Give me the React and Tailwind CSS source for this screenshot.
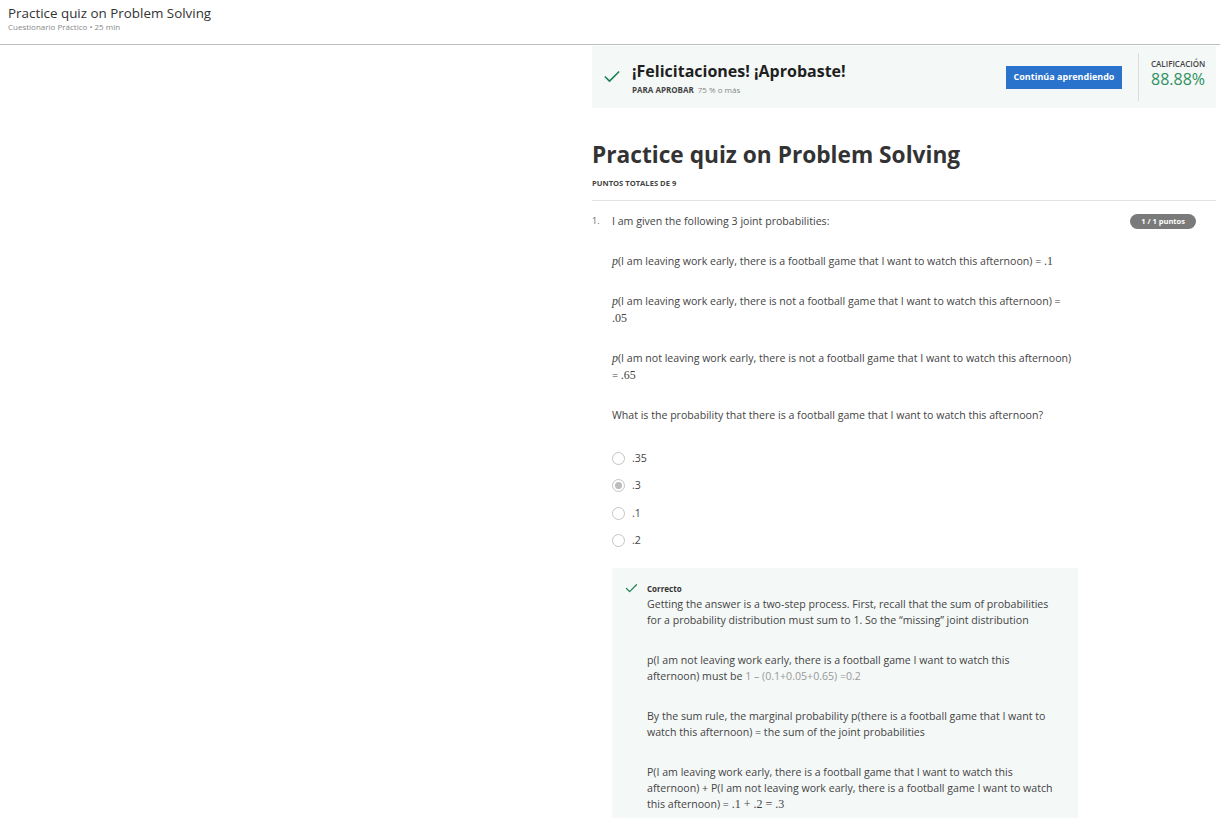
import { Check } from 'lucide-react'

const M = ({ children, italic }) => (
  <span className={`font-['Liberation_Serif',serif] text-[12px] leading-none ${italic ? 'italic' : ''}`}>{children}</span>
)

function Radio({ checked, label }) {
  return (
    <div className="flex items-center gap-[7px] h-[14px]">
      <span className="w-[13px] h-[13px] rounded-full border border-[#c4c4c4] bg-white flex items-center justify-center">
        {checked && <span className="w-[7px] h-[7px] rounded-full bg-[#bdbdbd]" />}
      </span>
      <span className="text-[10.6px] text-[#444]">{label}</span>
    </div>
  )
}

export default function App() {
  return (
    <div className="min-h-screen bg-white font-['Open_Sans',sans-serif] text-[#373a3c]">
      {/* Top header */}
      <div className="h-[45px] border-b border-[#bdbdbd] px-2 pt-[5px]">
        <p className="text-[13.4px] leading-[17px] text-[#333]">Practice quiz on Problem Solving</p>
        <p className="text-[8px] leading-[10px] text-[#888]">Cuestionario Práctico • 25 min</p>
      </div>

      <div className="flex">
        <div className="w-[592px] shrink-0" />
        <div className="w-[624px] pb-10">
          {/* Result banner */}
          <div className="mt-[1px] h-[62px] bg-[#f4f8f7] flex items-center">
            <Check className="ml-[10px] w-[20px] h-[20px] text-[#1f8354]" strokeWidth={2} />
            <div className="ml-[10px] flex-1">
              <p className="text-[16px] leading-[22px] font-bold text-[#1f1f1f]">¡Felicitaciones! ¡Aprobaste!</p>
              <p className="text-[8px] leading-[10px] text-[#888] mt-[3px]">
                <span className="font-bold text-[#444] mr-[4px]">PARA APROBAR</span>75 % o más
              </p>
            </div>
            <div className="w-[116px] h-[23px] bg-[#2a73cc] text-white text-[9px] font-bold flex items-center justify-center mr-[16px]">
              Continúa aprendiendo
            </div>
            <div className="w-px h-[48px] bg-[#dcdcdc]" />
            <div className="w-[77px] pl-[12px] self-start pt-[13px]">
              <p className="text-[8px] leading-[10px] text-[#444] font-semibold">CALIFICACIÓN</p>
              <p className="text-[16px] leading-[20px] text-[#2f9161]">88.88%</p>
            </div>
          </div>

          {/* Title */}
          <h1 className="mt-[32px] text-[22.7px] leading-[30px] font-bold text-[#333]">Practice quiz on Problem Solving</h1>
          <p className="mt-[8px] text-[7.6px] leading-[10px] font-bold text-[#444]">PUNTOS TOTALES DE 9</p>
          <div className="mt-[12px] border-t border-[#e2e2e2]" />

          {/* Question */}
          <div className="mt-[12px] flex items-start">
            <span className="w-[20px] text-[9px] leading-[16px] text-[#666]">1.</span>
            <div className="w-[466px] text-[10.6px] leading-[17px] text-[#444]">
              <p>I am given the following 3 joint probabilities:</p>
              <p className="mt-[23px]"><M italic>p</M>(I am leaving work early, there is a football game that I want to watch this afternoon) = <M>.1</M></p>
              <p className="mt-[23px]"><M italic>p</M>(I am leaving work early, there is not a football game that I want to watch this afternoon) = <M>.05</M></p>
              <p className="mt-[23px]"><M italic>p</M>(I am not leaving work early, there is not a football game that I want to watch this afternoon) = <M>.65</M></p>
              <p className="mt-[23px]">What is the probability that there is a football game that I want to watch this afternoon?</p>

              <div className="mt-[27px] flex flex-col gap-[13.5px]">
                <Radio label=".35" />
                <Radio checked label=".3" />
                <Radio label=".1" />
                <Radio label=".2" />
              </div>

              <div className="mt-[20px] w-[466px] bg-[#f4f8f7] pt-[14px] pb-[6px] pl-[12px] pr-[16px] flex">
                <Check className="mt-[-1px] w-[15px] h-[15px] text-[#1f8354] shrink-0" strokeWidth={2} />
                <div className="ml-[8px] text-[10.6px] leading-[16px] text-[#444]">
                  <p className="text-[8px] leading-[14px] font-bold text-[#333]">Correcto</p>
                  <p>Getting the answer is a two-step process. First, recall that the sum of probabilities for a probability distribution must sum to 1. So the “missing” joint distribution</p>
                  <p className="mt-[24px]">p(I am not leaving work early, there is a football game I want to watch this afternoon) must be <span className="text-[#999]">1 – (0.1+0.05+0.65) =0.2</span></p>
                  <p className="mt-[24px]">By the sum rule, the marginal probability p(there is a football game that I want to watch this afternoon) = the sum of the joint probabilities</p>
                  <p className="mt-[24px]">P(I am leaving work early, there is a football game that I want to watch this afternoon) + P(I am not leaving work early, there is a football game I want to watch this afternoon) = <M>.1 + .2 = .3</M></p>
                </div>
              </div>
            </div>
            <span className="ml-auto mr-[20px] mt-[1px] h-[15px] px-[11px] rounded-full bg-[#7a7a7a] text-white text-[7.5px] font-bold flex items-center">
              1 / 1 puntos
            </span>
          </div>
        </div>
      </div>
    </div>
  )
}
